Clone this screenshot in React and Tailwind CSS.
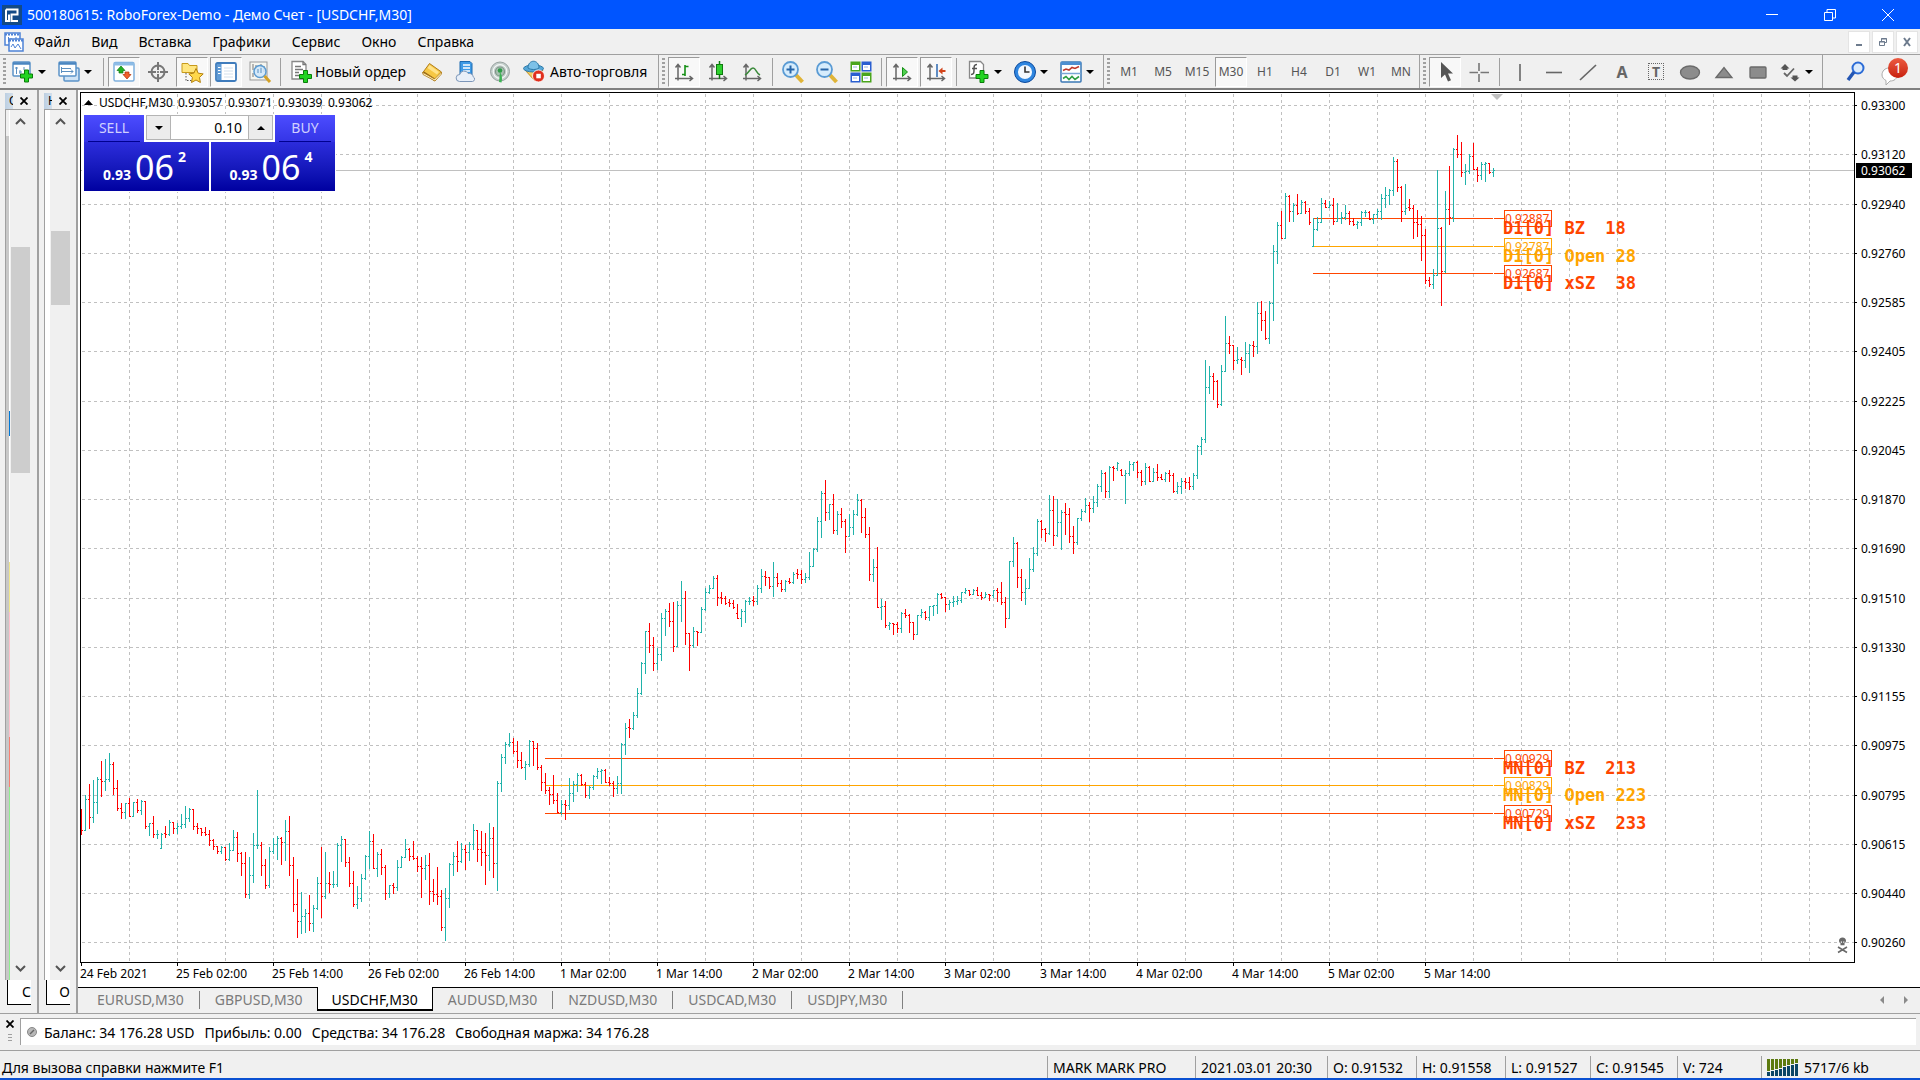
import React from 'react';

/* ---------- chart data: [high, low, close, open?] in plot units ---------- */
const BARS = [
  [809,835,830,825],[795,831,799],[784,829,817],[780,823,802],[777,814,779],[761,797,781],[759,791,779],[753,782,764],[762,795,788],[780,811,808],
  [803,819,812],[803,819,803],[798,817,816],[802,817,802],[799,813,810],[800,815,801],[801,829,826],[823,836,823],[816,838,834],[830,839,834],
  [833,849,834,848],[826,838,834,833],[820,836,822],[822,834,828],[823,834,826],[814,829,824],[806,828,818],[808,822,809],[809,830,826],[823,834,828],
  [828,836,832],[827,836,834],[830,846,840],[839,850,846],[846,854,851],[846,854,847],[847,861,859],[843,861,850],[830,850,837],[832,862,853],
  [852,876,863],[852,898,894],[857,899,875],[833,883,845],[790,849,845],[842,876,865],[859,889,885],[847,888,851],[838,854,844],[836,860,838],
  [837,865,842],[820,861,831],[816,876,865],[857,912,904],[879,938,921],[892,934,916],[909,933,913],[895,931,923],[905,932,908],[877,910,883],
  [847,918,896],[852,899,883],[872,893,884],[871,888,884],[843,887,845],[836,862,839],[839,867,862],[857,887,883],[871,907,904],[886,909,898],
  [874,902,878],[855,880,856],[831,869,841],[834,869,868],[852,877,854],[849,875,867],[865,900,893],[885,898,885],[883,894,887],[860,891,867],
  [856,868,857],[839,858,849],[848,861,856],[841,860,858],[856,872,866],[857,898,868],[855,880,865],[853,905,891],[879,902,894],[867,905,896],
  [890,931,927],[888,941,898],[863,908,864],[852,876,856],[841,872,861],[843,863,849],[845,870,852],[842,861,844],[824,850,830],[830,862,849],
  [831,866,852],[833,885,855],[823,871,838],[827,878,863],[781,891,783],[754,792,757],[742,764,744],[733,747,742],[738,754,751],[741,768,760],
  [752,769,767],[761,780,764],[740,767,741],[741,766,748],[743,770,767],[765,791,782],[773,794,790],[787,805,794],[775,804,800],[793,813,812],
  [800,815,804],[800,820,805],[778,810,793],[781,802,784],[773,792,775],[774,786,784],[782,798,795],[786,799,787],[775,790,776],[768,779,771],
  [769,784,770],[769,783,782],[777,786,783],[781,797,788],[776,794,783],[743,794,744],[723,755,728],[719,738,728,727],[712,730,715],[688,718,693],
  [662,695,663],[631,674,631],[623,653,645],[637,671,663],[648,670,654],[613,661,618],[609,636,611],[603,627,621],[602,652,646],[601,647,605],
  [581,622,598],[591,645,633],[634,671,645],[627,648,631],[631,646,632],[607,633,609],[588,611,592],[585,594,588],[576,589,578],[575,606,597],
  [592,604,598],[596,605,603],[599,607,603,602],[600,609,607],[604,619,618,613],[609,627,611],[600,623,601],[597,605,601],[596,606,601,600],[585,605,588],
  [569,593,576],[571,586,577],[577,589,586],[562,597,577],[573,587,583],[580,592,589],[580,592,581],[578,584,582],[572,584,574],[569,579,574,573],
  [570,584,579],[573,583,577],[552,580,566],[548,567,549],[517,552,521],[491,538,493],[480,521,512],[504,520,504],[494,534,530],[511,535,514],
  [508,528,521],[519,553,536],[514,537,527],[510,535,514],[494,516,500],[499,533,517],[508,538,534],[527,581,574],[559,582,567],[547,608,607],
  [599,620,606],[601,628,625],[622,630,623],[623,635,624],[622,633,628],[612,633,613],[609,618,615],[614,633,622],[622,640,634],[615,635,615],
  [609,618,612],[611,620,617],[606,621,606],[605,616,605],[593,614,594],[593,599,597],[597,612,604],[600,610,602],[596,607,601],[596,605,600],
  [592,603,592],[588,594,590],[590,596,594],[589,595,590],[587,596,595],[592,600,597],[592,598,594],[594,601,595],[590,598,590],[588,602,592],
  [582,605,602],[597,628,618],[561,619,561],[537,567,543],[542,588,577],[569,601,592],[579,605,588],[558,589,569],[547,572,553],[519,556,521],
  [520,538,529],[528,542,533],[495,535,510],[496,546,535],[499,537,522],[510,550,512],[503,535,514],[508,543,536],[526,554,542],[518,545,518],
  [509,521,511],[498,513,505],[502,522,508],[496,513,502],[484,507,486],[470,492,473],[472,498,491],[466,498,467],[466,481,468],[462,471,463],
  [469,476,475,470],[470,504,473],[461,476,464],[462,471,462],[461,478,472],[470,486,481],[463,485,467],[466,482,481],[468,482,472],[464,481,477],
  [474,480,479],[472,482,473],[470,482,475],[473,493,491],[482,494,486],[478,494,481],[478,489,482],[477,490,486],[473,490,475],[445,479,446],
  [437,455,439],[360,443,387],[366,394,376],[373,400,381],[380,408,404],[365,406,371],[316,372,343],[336,354,345],[345,370,360],[347,364,359],
  [357,375,360],[342,368,353],[344,373,345],[341,357,346],[302,354,313],[301,331,320],[311,340,338],[301,344,303],[245,321,251],[222,264,225],
  [211,239,238],[193,239,196],[195,222,211],[203,222,205],[194,215,213],[200,214,202],[201,214,211],[208,225,222],[218,247,229,246],[217,231,222],
  [198,223,203],[200,208,207],[201,208,205],[198,225,221],[203,222,218],[212,224,217],[205,220,213],[211,225,221],[218,226,224],[221,229,222],
  [211,226,212],[210,217,212],[211,220,219],[214,224,214],[209,219,211],[194,220,198],[187,208,195],[189,205,190],[157,196,161],[159,192,187],
  [186,222,211],[184,215,208],[199,211,208,207],[205,239,222],[210,237,224],[216,261,235],[229,284,280],[277,287,284],[269,289,275],[170,276,228],
  [227,306,271],[191,273,209],[166,225,217],[148,222,149],[135,158,154],[142,177,172],[164,185,171],[154,174,156],[143,170,169],[167,182,175],
  [162,180,164],[162,182,163],[163,174,172],[168,177,170],
];

const buildBars = () => {
  let up = '';
  let down = '';
  let prev = BARS[0][3];
  BARS.forEach(([high, low, close, open = prev], i) => {
    const x = 81 + i * 4;
    const d = `M${x + 0.5} ${high}V${low}M${x - 1} ${open + 0.5}h2M${x} ${close + 0.5}h2`;
    if (close <= open) up += d;
    else down += d;
    prev = close;
  });
  return { up, down };
};
const PATHS = buildBars();

const PRICES = [
  ['0.93300', 105], ['0.93120', 154], ['0.92940', 204], ['0.92760', 253], ['0.92585', 302], ['0.92405', 351],
  ['0.92225', 401], ['0.92045', 450], ['0.91870', 499], ['0.91690', 548], ['0.91510', 598], ['0.91330', 647],
  ['0.91155', 696], ['0.90975', 745], ['0.90795', 795], ['0.90615', 844], ['0.90440', 893], ['0.90260', 942],
];
const TIMES = [
  '24 Feb 2021', '25 Feb 02:00', '25 Feb 14:00', '26 Feb 02:00', '26 Feb 14:00', '1 Mar 02:00', '1 Mar 14:00', '2 Mar 02:00',
  '2 Mar 14:00', '3 Mar 02:00', '3 Mar 14:00', '4 Mar 02:00', '4 Mar 14:00', '5 Mar 02:00', '5 Mar 14:00',
];
const QUOTE = [['USDCHF,M30', 99], ['0.93057', 178], ['0.93071', 228], ['0.93039', 278], ['0.93062', 328]];
const COLUMNS = Array.from({ length: 36 }, (_, k) => 129 + k * 48);
const LEVELS = [
  { y: 218, x: 1313, price: '0.92887', text: 'D1[0] BZ  18', color: '#ff4500' },
  { y: 246, x: 1313, price: '0.92787', text: 'D1[0] Open 28', color: '#ffa500' },
  { y: 273, x: 1313, price: '0.92687', text: 'D1[0] xSZ  38', color: '#ff4500' },
  { y: 758, x: 545, price: '0.90929', text: 'MN[0] BZ  213', color: '#ff4500' },
  { y: 785, x: 545, price: '0.90829', text: 'MN[0] Open 223', color: '#ffa500' },
  { y: 813, x: 545, price: '0.90729', text: 'MN[0] xSZ  233', color: '#ff4500' },
];

function PriceChart() {
  return (
    <svg className="absolute inset-0 h-full w-full font-['Noto_Sans',sans-serif] text-[12px]" viewBox="78 90 1842 897" preserveAspectRatio="xMinYMin meet" role="img" aria-label="USDCHF,M30">
      <g shapeRendering="crispEdges" fill="none">
        <g stroke="#c0c0c0" strokeDasharray="3 3">
          {PRICES.map(([p, y]) => <path key={p} d={`M82 ${y + 0.5}H1854`} />)}
          {COLUMNS.map((x) => <path key={x} d={`M${x + 0.5} 94V962`} />)}
        </g>
        <path d="M81 170.5H1854" stroke="#c0c0c0" />
        {LEVELS.map((l) => <path key={l.y} d={`M${l.x} ${l.y + 0.5}H1493`} stroke={l.color} />)}
        <path d={PATHS.up} stroke="#20b2aa" />
        <path d={PATHS.down} stroke="#ff0000" />
        <path d="M80.5 92.5H1854.5V962.5H80.5Z" stroke="#000" />
        {PRICES.map(([p, y]) => <path key={p} d={`M1855 ${y + 0.5}h2`} stroke="#000" />)}
        {TIMES.map((t, i) => <path key={t} d={`M${81.5 + i * 96} 963v3`} stroke="#000" />)}
      </g>
      <path d="M1491 94h12l-6 6z" fill="#c0c0c0" />
      <path d="M84 105l4.500-5 4.500 5z" fill="#000" />
      {PRICES.map(([p, y]) => <text key={p} x="1861" y={y + 5}>{p}</text>)}
      {TIMES.map((t, i) => <text key={t} x={80 + i * 96} y="978">{t}</text>)}
      <rect x="1856" y="163" width="56" height="15" fill="#000" />
      <text x="1861" y="175" fill="#fff">0.93062</text>
      {QUOTE.map(([t, x]) => <text key={t} x={x} y="107">{t}</text>)}
      {LEVELS.map((l) => (
        <g key={l.y} fill={l.color}>
          <path d={`M1494 ${l.y + 0.5}h10M1504.5 ${l.y - 7.5}h47v16h-47z`} fill="none" stroke={l.color} shapeRendering="crispEdges" />
          <text x="1505" y={l.y + 5}>{l.price}</text>
          <text x="1503" y={l.y + 16} className="font-['DejaVu_Sans_Mono',monospace] text-[17px] font-bold whitespace-pre">{l.text}</text>
        </g>
      ))}
      <g fill="#696969">
        <path d="M1842.500 937.500c2.200 0 3.500 1.400 3.500 3.200 0 1.200-.7 2.100-1.500 2.600v2h-4v-2c-.8-.5-1.500-1.400-1.500-2.600 0-1.800 1.300-3.200 3.500-3.200z" />
        <path d="M1838 947l9 5.500M1847 947l-9 5.500" stroke="#696969" strokeWidth="1.600" />
        <path d="M1840.800 941.500h1.200v1.200h-1.200zM1843.200 941.500h1.200v1.200h-1.200z" fill="#fff" />
      </g>
    </svg>
  );
}

/* ---------- icons ---------- */
const Svg = ({ children, w = 24 }) => (
  <svg width={w} height={24} viewBox={`0 0 ${w} 24`} fill="none" aria-hidden="true" className="shrink-0">{children}</svg>
);
const Plus = ({ x, y }) => (
  <path transform={`translate(${x} ${y})`} d="M4.500.5h4v4h4v4h-4v4h-4v-4h-4v-4h4z" fill="#22d422" stroke="#0a7d0a" />
);
const Axes = () => <path d="M6 20.500V5M3.500 7.500l2.500-3 2.500 3M3 18.500h17M17.500 16l3 2.500-3 2.500" stroke="#666" strokeWidth="1.500" />;

const ICONS = {
  newChart: (
    <Svg>
      <rect x="2" y="2" width="17" height="14" rx="1" fill="#fff" stroke="#5b93c8" strokeWidth="1.500" />
      <path d="M2 3.500h17" stroke="#4a86c0" strokeWidth="2.500" />
      <path d="M5.500 7v7M4 8h3M9 10v4M8 12h3M13 7v3" stroke="#5b8fc0" />
      <Plus x={9} y={9.500} />
    </Svg>
  ),
  profiles: (
    <Svg>
      <rect x="7" y="8" width="15" height="13" rx="1" fill="#cfe3f5" stroke="#5b93c8" strokeWidth="1.500" />
      <rect x="2" y="2" width="17" height="14" rx="1" fill="#fff" stroke="#5b93c8" strokeWidth="1.500" />
      <path d="M2 3.500h17" stroke="#4a86c0" strokeWidth="2.500" />
      <path d="M4.500 7v6M4 11.500h12M14 9.500l2 2-2 2M5 8.500h9" stroke="#5b8fc0" />
    </Svg>
  ),
  market: (
    <Svg>
      <rect x="2" y="2.500" width="20" height="18.500" rx="1.500" fill="#fff" stroke="#7fb0dd" strokeWidth="1.500" />
      <path d="M2 4h20" stroke="#8dbce6" strokeWidth="3" />
      <path d="M9 6l4 4.500h-2V13H7v-2.500H5z" fill="#23b023" stroke="#127812" strokeWidth=".7" />
      <path d="M15 19l-4-4.500h2V12h4v2.500h2z" fill="#f0602a" stroke="#b03208" strokeWidth=".7" />
    </Svg>
  ),
  data: (
    <Svg>
      <circle cx="12" cy="12" r="6.500" stroke="#777" strokeWidth="2" />
      <path d="M12 2v8M12 14v8M2 12h8M14 12h8" stroke="#777" strokeWidth="2" />
      <circle cx="12" cy="12" r="1" fill="#666" />
    </Svg>
  ),
  navigator: (
    <Svg>
      <path d="M2 3.500h6l1.500 2H17v7H2z" fill="#ffe680" stroke="#c79a1c" />
      <path d="M6 13v8M7 20.500h5" stroke="#555" strokeDasharray="1.500 1.500" />
      <path d="M16 8.500l2.200 4.700 5 .7-3.700 3.500.9 5.100-4.400-2.500-4.500 2.500.9-5.100-3.600-3.500 5-.7z" fill="#ffd84a" stroke="#b5820e" />
    </Svg>
  ),
  terminal: (
    <Svg>
      <rect x="2" y="3" width="20" height="18" rx="1.500" fill="#fff" stroke="#3f7cbc" strokeWidth="1.800" />
      <path d="M3 4h4.500v16H3z" fill="#5f9bd6" />
      <path d="M10 8h9M10 11h9M10 14h9M10 17h9" stroke="#d3e0ec" />
      <path d="M4 7.500h2.500M4 10.500h2.500M4 13.500h2.500" stroke="#fff" />
    </Svg>
  ),
  tester: (
    <Svg>
      <rect x="2" y="2" width="17" height="18" fill="#f6f6f0" stroke="#999" />
      <path d="M5 4v6M8 5v4M13 4v4M16 6v6M5 13v4" stroke="#777" />
      <circle cx="12" cy="11.500" r="6" fill="#cfe8fb" fillOpacity=".85" stroke="#5c9bd0" strokeWidth="1.500" />
      <path d="M10 9v4M13 8v5" stroke="#5b8fc0" />
      <path d="M16.500 16l5.500 6" stroke="#d3a126" strokeWidth="3" />
    </Svg>
  ),
  order: (
    <Svg>
      <path d="M3 1.500h11l3 3V19H3z" fill="#fff" stroke="#888" strokeWidth="1.300" />
      <path d="M14 1.500v3h3M6 6.500h6M6 9.500h8M6 12.500h4M6 15.500h4" stroke="#777" strokeWidth="1.300" />
      <Plus x={10} y={10} />
    </Svg>
  ),
  metaEditor: (
    <Svg>
      <path d="M2.500 13l7-9.500 12 8.500-6.500 9z" fill="#f6c744" stroke="#b17d1a" />
      <path d="M2.500 13l12 8 .500-2.500L4 11.500z" fill="#8e5f10" />
      <path d="M3 14.500l12 6.500 6.500-7v-2l-7 7-11.500-6.500z" fill="#fff3c8" stroke="#b17d1a" strokeWidth=".8" />
      <path d="M9.500 5l9.500 7-2 2.500L7.500 8z" fill="#ffe38a" />
    </Svg>
  ),
  market2: (
    <Svg>
      <path d="M6 1.500h10l2 2V15H6z" fill="#3f9be6" stroke="#1c6ab0" />
      <path d="M9 5h7M9 8h7M9 11h7" stroke="#fff" strokeWidth="1.500" />
      <path d="M5.500 21.500a3.500 3.500 0 01.3-7 4.500 4.500 0 018.400-1 4 4 0 015 3.300 2.500 2.500 0 01-.7 4.700z" fill="#e8eff8" stroke="#7c96b8" />
    </Svg>
  ),
  signals: (
    <Svg>
      <circle cx="12" cy="11.500" r="9.500" fill="#c3ccca" stroke="#98a3a0" />
      <circle cx="12" cy="11.500" r="6.800" stroke="#f4f8f6" strokeWidth="1.200" />
      <circle cx="12" cy="11.500" r="4.500" fill="#a9c0b2" stroke="#7f9688" strokeWidth="1.200" />
      <circle cx="12" cy="10.500" r="2.300" fill="#2e9c48" />
      <path d="M12 12c2 3 2.500 6 1.500 10.500a12 12 0 01-2.500-.5z" fill="#3cb354" />
    </Svg>
  ),
  auto: (
    <Svg>
      <path d="M3 10l10 11 8-11z" fill="#f6cf62" stroke="#bf8d1f" />
      <ellipse cx="11.500" cy="8.500" rx="10" ry="3.500" fill="#55a7d8" stroke="#2d79a8" />
      <path d="M6 8c0-9 11-9 11 0-3 2-8 2-11 0z" fill="#7cc1e8" stroke="#2d79a8" />
      <circle cx="16.500" cy="16" r="6" fill="#e0301e" stroke="#fff" strokeWidth=".8" />
      <rect x="14.300" y="13.800" width="4.500" height="4.500" fill="#fff" />
    </Svg>
  ),
  barChart: <Svg><Axes /><path d="M13 5v11M13 6.500h3.500M10 14.500h3" stroke="#169016" strokeWidth="1.600" /></Svg>,
  candles: <Svg><Axes /><path d="M13.500 1v18" stroke="#0f7a0f" strokeWidth="1.500" /><rect x="10.500" y="4.500" width="6" height="10" fill="#2ed02e" stroke="#0f7a0f" /></Svg>,
  line: <Svg><Axes /><path d="M5 15c4-2 5-7 8-7s3 5 7 7" stroke="#3b8a3b" strokeWidth="1.500" /></Svg>,
  zoomIn: (
    <Svg>
      <path d="M15 15l6.500 7" stroke="#e0b437" strokeWidth="4" />
      <circle cx="9.500" cy="9.500" r="7.500" fill="#d6ecfc" stroke="#5a9bd4" strokeWidth="1.800" />
      <path d="M9.500 5.500v8M5.500 9.500h8" stroke="#2765a8" strokeWidth="2" />
    </Svg>
  ),
  zoomOut: (
    <Svg>
      <path d="M15 15l6.500 7" stroke="#e0b437" strokeWidth="4" />
      <circle cx="9.500" cy="9.500" r="7.500" fill="#d6ecfc" stroke="#5a9bd4" strokeWidth="1.800" />
      <path d="M5.500 9.500h8" stroke="#2765a8" strokeWidth="2" />
    </Svg>
  ),
  tiles: (
    <Svg>
      <rect x="1.500" y="1.500" width="10" height="10" fill="#4aa51c" /><rect x="12.500" y="1.500" width="10" height="10" fill="#2a5fd0" />
      <rect x="1.500" y="12.500" width="10" height="10" fill="#2a5fd0" /><rect x="12.500" y="12.500" width="10" height="10" fill="#4aa51c" />
      <path d="M3 5h7v5H3zM14 5h7v5h-7zM3 16h7v5H3zM14 16h7v5h-7z" fill="#fff" />
      <path d="M4 7h4M15 7h4M4 18h4M15 18h4" stroke="#9ab8dd" />
    </Svg>
  ),
  autoScroll: <Svg><Axes /><path d="M12.500 7.500l5 4.500-5 4.500z" fill="#4fd04f" stroke="#169016" /></Svg>,
  shift: <Svg><Axes /><path d="M13 4v13" stroke="#2c68b0" strokeWidth="1.500" /><path d="M14.500 11l4-3.500v2.500h3v2h-3v2.500z" fill="#d2431a" /></Svg>,
  indicators: (
    <Svg>
      <path d="M2.500 1.500h11l3 3V18h-14z" fill="#fff" stroke="#888" strokeWidth="1.300" />
      <path d="M10 4.500c-3 0-3 2-3 5s0 5-3 5M5 8.500h5" stroke="#555" strokeWidth="1.500" />
      <Plus x={8.500} y={10} />
    </Svg>
  ),
  clock: (
    <Svg>
      <circle cx="12" cy="12" r="8.800" fill="#f3f9ff" stroke="#2f86e0" strokeWidth="3.500" />
      <circle cx="12" cy="12" r="10.500" stroke="#0d4a9c" />
      <path d="M12 6.500V12h4.500" stroke="#333" strokeWidth="1.600" />
    </Svg>
  ),
  template: (
    <Svg>
      <rect x="2" y="2" width="20" height="20" rx="1" fill="#fff" stroke="#3a78b5" strokeWidth="1.500" />
      <path d="M2 3.500h20" stroke="#4d8fd1" strokeWidth="3" /><path d="M2 13.500h20" stroke="#7aa7d4" strokeWidth="1.500" />
      <path d="M4 10.500l3-1.500 3 1 3-2.500 3 1 4-2" stroke="#c0392b" strokeWidth="1.600" />
      <path d="M4 18.500l3-2 3 3 3-3 3 3 4-3" stroke="#2f9e44" strokeWidth="1.600" />
    </Svg>
  ),
  cursor: <Svg><path d="M8 2v16l4-3.500 3 7 3-1.300-3-6.700h5z" fill="#555" /></Svg>,
  cross: <Svg><path d="M12 3v8M12 14v8M2.500 12.500H11M13.500 12.500H22" stroke="#777" strokeWidth="1.600" /></Svg>,
  vline: <Svg><path d="M12 4v17" stroke="#666" strokeWidth="1.600" /></Svg>,
  hline: <Svg><path d="M4 12.500h16" stroke="#666" strokeWidth="1.600" /></Svg>,
  trend: <Svg><path d="M4 20L20 5" stroke="#666" strokeWidth="1.700" /></Svg>,
  ellipse: <Svg><ellipse cx="12" cy="12.500" rx="9.500" ry="6.500" fill="#8c8c8c" stroke="#6a6a6a" strokeWidth="1.300" /></Svg>,
  triangle: <Svg><path d="M4 17.500l8-10 8 10z" fill="#8c8c8c" stroke="#6a6a6a" strokeWidth="1.300" /></Svg>,
  rect: <Svg><rect x="4" y="7" width="16" height="11" rx="1" fill="#8c8c8c" stroke="#6a6a6a" strokeWidth="1.300" /></Svg>,
  arrows: (
    <Svg>
      <path d="M7 4l4.500 4.500H9.500V10h-5V8.500h-2zM17 21.500l-4.500-4H14.500V15.500h5v2h2z" fill="#555" />
      <path d="M6 13l3 3 7-7.500" stroke="#666" strokeWidth="1.800" />
    </Svg>
  ),
};

/* ---------- toolbar pieces ---------- */
const Caret = () => <span className="h-0 w-0 border-x-4 border-t-4 border-x-transparent border-t-black" />;
const Sep = () => <span className="mr-1 ml-0.5 h-7 w-px bg-[#a0a0a0]" />;
const Grip = () => <span className="mx-[3px] h-7 w-[3px] bg-[repeating-linear-gradient(#a0a0a0_0_2px,transparent_2px_4px)]" />;

function Tool({ label, icon, pressed, children }) {
  const look = pressed
    ? 'border-t-[#9a9a9a] border-l-[#9a9a9a] border-r-white border-b-white bg-[#f8f8f8]'
    : 'border-transparent';
  return (
    <button type="button" aria-label={label} aria-pressed={!!pressed} className={`mr-0.5 flex h-[30px] w-8 items-center justify-center border ${look}`}>
      {icon || children}
    </button>
  );
}
const DropTool = ({ label, icon }) => (
  <button type="button" aria-label={label} className="flex h-[30px] w-[46px] items-center gap-[3px] pl-0.5">
    {icon}<Caret />
  </button>
);
const Group = ({ children, label }) => (
  <div role="group" aria-label={label} className="flex h-full items-center border-r border-[#a0a0a0]">{children}</div>
);

function Toolbar() {
  return (
    <div className="flex h-[35px] shrink-0 items-center overflow-hidden border-b-2 border-[#808080] bg-[#f0f0f0] text-[14px]">
      <Group label="Стандартная">
        <Grip />
        <DropTool label="Новый график" icon={ICONS.newChart} />
        <DropTool label="Профили" icon={ICONS.profiles} />
        <Sep />
        <Tool label="Обзор рынка" icon={ICONS.market} pressed />
        <Tool label="Окно данных" icon={ICONS.data} />
        <Tool label="Навигатор" icon={ICONS.navigator} pressed />
        <Tool label="Терминал" icon={ICONS.terminal} pressed />
        <Tool label="Тестер стратегий" icon={ICONS.tester} />
        <Sep />
        <button type="button" className="flex h-[30px] items-center gap-0.5 pl-1">{ICONS.order}<span className="w-[101px] text-left whitespace-nowrap">Новый ордер</span></button>
        <Tool label="MetaEditor" icon={ICONS.metaEditor} />
        <Tool label="Маркет" icon={ICONS.market2} />
        <Tool label="Сигналы" icon={ICONS.signals} />
        <button type="button" className="flex h-[30px] items-center gap-1 pr-2 pl-1">{ICONS.auto}<span className="w-[100px] text-left whitespace-nowrap">Авто-торговля</span></button>
      </Group>
      <Group label="Графики">
        <Grip />
        <Tool label="Бары" icon={ICONS.barChart} pressed />
        <Tool label="Японские свечи" icon={ICONS.candles} />
        <Tool label="Линия" icon={ICONS.line} />
        <Sep />
        <Tool label="Приблизить" icon={ICONS.zoomIn} />
        <Tool label="Отдалить" icon={ICONS.zoomOut} />
        <Tool label="Расположить окна" icon={ICONS.tiles} />
        <Sep />
        <Tool label="Автопрокрутка" icon={ICONS.autoScroll} pressed />
        <Tool label="Сдвиг графика" icon={ICONS.shift} pressed />
        <Sep />
        <div className="flex pl-1">
          <DropTool label="Индикаторы" icon={ICONS.indicators} />
          <DropTool label="Периоды" icon={ICONS.clock} />
          <DropTool label="Шаблоны" icon={ICONS.template} />
        </div>
      </Group>
      <Group label="Периоды">
        <Grip />
        {['M1', 'M5', 'M15', 'M30', 'H1', 'H4', 'D1', 'W1', 'MN'].map((p) => (
          <Tool key={p} label={p} pressed={p === 'M30'}><span className="text-[12px] text-[#555]">{p}</span></Tool>
        ))}
      </Group>
      <Group label="Инструменты">
        <Grip />
        <Tool label="Курсор" icon={ICONS.cursor} pressed />
        <Tool label="Перекрестие" icon={ICONS.cross} />
        <Sep />
        <Tool label="Вертикальная линия" icon={ICONS.vline} />
        <Tool label="Горизонтальная линия" icon={ICONS.hline} />
        <Tool label="Трендовая линия" icon={ICONS.trend} />
        <Tool label="Текст"><span className="text-[16px] font-bold text-[#666]">A</span></Tool>
        <Tool label="Текстовая метка"><span className="flex h-[17px] w-4 items-center justify-center border border-dotted border-[#666] text-[14px] font-bold text-[#666]">T</span></Tool>
        <Tool label="Эллипс" icon={ICONS.ellipse} />
        <Tool label="Треугольник" icon={ICONS.triangle} />
        <Tool label="Прямоугольник" icon={ICONS.rect} />
        <DropTool label="Стрелки" icon={ICONS.arrows} />
      </Group>
      <div className="ml-auto flex items-center gap-3 pr-3">
        <button type="button" aria-label="Поиск">
          <Svg><circle cx="14" cy="8" r="5.500" fill="#dcebfb" stroke="#2b6bd6" strokeWidth="2" /><path d="M10 12l-6 8" stroke="#2456b4" strokeWidth="3.500" /></Svg>
        </button>
        <button type="button" aria-label="Уведомления" className="relative h-8 w-7">
          <svg width="28" height="32" viewBox="0 0 28 32" fill="none" aria-hidden="true">
            <path d="M9 12c5 0 8 3 8 7s-3 6-7 6l-4 4v-4.500c-2-1-4-3-4-5.500 0-4 3-7 7-7z" fill="#fff" stroke="#aaa" />
          </svg>
          <span className="absolute top-0.5 right-0 flex h-5 w-5 items-center justify-center rounded-full bg-linear-to-b from-[#ec5a40] to-[#c81c08] text-[14px] text-white">1</span>
        </button>
      </div>
    </div>
  );
}

function TitleBar() {
  const btn = 'flex h-full w-[58px] items-center justify-center';
  return (
    <header className="flex h-[29px] shrink-0 items-center bg-[#0055ff] pr-[3px] pl-0.5 text-white">
      <svg width="20" height="20" viewBox="0 0 20 20" aria-hidden="true">
        <rect width="20" height="20" fill="#134a86" />
        <path d="M4 4.500h11.500v5H9.500v6.500h6.500M4 4.500v11.500h3V9.500" fill="none" stroke="#fff" strokeWidth="2" />
      </svg>
      <h1 className="ml-[5px] text-[14px] whitespace-nowrap">500180615: RoboForex-Demo - Демо Счет - [USDCHF,M30]</h1>
      <div className="ml-auto flex h-full">
        <button type="button" aria-label="Свернуть" className={btn}><svg width="12" height="12"><path d="M0 5.500h12" stroke="#fff" /></svg></button>
        <button type="button" aria-label="Восстановить" className={btn}>
          <svg width="12" height="12" fill="none" stroke="#fff"><path d="M.5 3.500h8v8h-8zM3 3V.5h8.500V9H9" /></svg>
        </button>
        <button type="button" aria-label="Закрыть" className={btn}><svg width="12" height="12" stroke="#fff"><path d="M0 0l12 12M12 0L0 12" /></svg></button>
      </div>
    </header>
  );
}

function MenuBar() {
  const btn = 'flex h-[22px] w-[22px] items-center justify-center border border-[#e4e4e4] bg-white';
  return (
    <div className="flex h-[26px] shrink-0 items-center border-b border-[#a0a0a0] bg-[#f0f0f0] pl-1">
      <svg width="20" height="20" viewBox="0 0 20 20" fill="none" aria-hidden="true">
        <rect x="1" y="1" width="15" height="12" fill="#fff" stroke="#4d82d6" strokeWidth="1.500" />
        <path d="M1 2.500h15" stroke="#4d82d6" strokeWidth="2" strokeDasharray="2 1" />
        <path d="M4.500 5v5M7 6v4M12 5v3" stroke="#4d82d6" />
        <rect x="5" y="7" width="14" height="12" fill="#fff" stroke="#4d82d6" strokeWidth="1.500" />
        <path d="M5 8.500h14" stroke="#4d82d6" strokeWidth="2" strokeDasharray="2 1" />
        <path d="M7 15l2-3 2 4 3-4 3 5" stroke="#4d82d6" />
      </svg>
      <nav className="flex gap-px text-[14px]">
        {['Файл', 'Вид', 'Вставка', 'Графики', 'Сервис', 'Окно', 'Справка'].map((m) => (
          <button key={m} type="button" className="px-2.5">{m}</button>
        ))}
      </nav>
      <div className="ml-auto flex gap-0.5 pr-0.5">
        <button type="button" aria-label="Свернуть окно" className={btn}><svg width="12" height="12"><path d="M3 9h6" stroke="#6d7b8d" strokeWidth="2" /></svg></button>
        <button type="button" aria-label="Восстановить окно" className={btn}>
          <svg width="12" height="12" fill="none" stroke="#6d7b8d"><path d="M2.500 5.500h5v4h-5zM2 6h6M4.500 5V2.500h5v4H8M4 3h6" /></svg>
        </button>
        <button type="button" aria-label="Закрыть окно" className={btn}><svg width="12" height="12" stroke="#6d7b8d" strokeWidth="2"><path d="M3 2l6 8M9 2L3 10" /></svg></button>
      </div>
    </div>
  );
}

/* ---------- collapsed side panels ---------- */
const Chevron = ({ down }) => (
  <svg width="11" height="7" viewBox="0 0 11 7" fill="none" stroke="#555" strokeWidth="2" aria-hidden="true">
    <path d={down ? 'M1 1l4.500 4.500L10 1' : 'M1 6l4.500-4.500L10 6'} />
  </svg>
);

function SidePanel({ title, tab, strip, thumb }) {
  return (
    <aside className="flex w-[39px] shrink-0 flex-col border-r-2 border-r-[#a0a0a0] bg-[#f0f0f0] pt-0.5 pr-1.5 pb-2 pl-[5px]">
      <div className="flex h-[17px] items-center">
        <span className="w-2 overflow-hidden bg-linear-to-r from-[#bccfe2] to-[#d3dfeb] pl-1 text-[12px] leading-4">{title}</span>
        <button type="button" aria-label="Закрыть панель" className="ml-[7px]">
          <svg width="8" height="8" stroke="#000" strokeWidth="1.800"><path d="M.5.5l7 7M7.500.5l-7 7" /></svg>
        </button>
      </div>
      <div className="flex flex-1 border-t border-l border-[#a0a0a0]">
        {strip}
        <div className="flex flex-1 flex-col items-center justify-between bg-[#f0f0f0] pb-2">
          <button type="button" aria-label="Вверх" className="flex h-[22px] items-center"><Chevron /></button>
          <span className={`w-[19px] bg-[#cdcdcd] ${thumb}`} />
          <span className="flex-1" />
          <button type="button" aria-label="Вниз" className="flex items-center"><Chevron down /></button>
        </div>
      </div>
      <div className="ml-0.5 flex h-[25px] w-6 justify-end overflow-hidden border-b border-l border-black bg-white text-[14px] leading-6">{tab}</div>
    </aside>
  );
}

function TradePanel() {
  const side = 'flex h-[27px] w-[60px] flex-col items-stretch bg-linear-to-b from-[#4c4cff] to-[#3434e6] px-1 text-[14px] text-[#d0d0ff]';
  const price = 'flex h-[49px] flex-1 items-end bg-linear-to-b from-[#2c2cdc] to-[#0000a0] pl-[19px] text-white';
  const Quote = ({ sup, label }) => (
    <button type="button" aria-label={label} className={price}>
      <span className="pb-2 text-[14px] leading-4 font-bold">0.93</span>
      <span className="ml-1 pb-3 text-[34px] leading-6">06</span>
      <span className="ml-1 self-start pt-1 text-[14px] font-bold">{sup}</span>
    </button>
  );
  return (
    <section aria-label="Торговля" className="absolute top-6 left-1 w-[254px] bg-white p-px pl-0.5">
      <div className="flex justify-between">
        <button type="button" className={side}><span className="flex-1 border-b border-[#000090] leading-[26px]">SELL</span></button>
        <div className="flex h-[25px] w-[127px] border border-[#b4b4b4] bg-white">
          <button type="button" aria-label="Уменьшить объем" className="flex w-6 items-center justify-center border-r border-[#b4b4b4] bg-[#ececec]"><Caret /></button>
          <input aria-label="Объем" defaultValue="0.10" className="min-w-0 flex-1 pr-1.5 text-right text-[14px] outline-none" />
          <button type="button" aria-label="Увеличить объем" className="flex w-6 items-center justify-center border-l border-[#b4b4b4] bg-[#ececec]">
            <span className="h-0 w-0 border-x-4 border-b-4 border-x-transparent border-b-black" />
          </button>
        </div>
        <button type="button" className={side}><span className="flex-1 border-b border-[#000090] leading-[26px]">BUY</span></button>
      </div>
      <div className="flex gap-0.5">
        <Quote sup="2" label="SELL 0.93062" />
        <Quote sup="4" label="BUY 0.93064" />
      </div>
    </section>
  );
}

const TABS = ['EURUSD,M30', 'GBPUSD,M30', 'USDCHF,M30', 'AUDUSD,M30', 'NZDUSD,M30', 'USDCAD,M30', 'USDJPY,M30'];

function ChartTabs() {
  return (
    <div className="flex h-[26px] shrink-0 items-start border-t border-black bg-[#f0f0f0] pr-3 pl-1">
      <nav className="flex text-[14px]">
        {TABS.map((t, i) => t === 'USDCHF,M30' ? (
          <button key={t} type="button" aria-current="page" className="relative -mt-px -ml-px h-6 border-x border-b-2 border-black bg-white px-[14px] pt-1 leading-[18px]">{t}</button>
        ) : (
          <button key={t} type="button" className="flex h-6 items-center text-[#7a7a7a]">
            <span className={`px-[15px] leading-[18px] ${i === 1 ? '' : 'border-r border-[#808080]'}`}>{t}</span>
          </button>
        ))}
      </nav>
      <div className="ml-auto flex h-6 items-center gap-5">
        <button type="button" aria-label="Назад" className="h-0 w-0 border-y-4 border-r-4 border-y-transparent border-r-[#8a8a8a]" />
        <button type="button" aria-label="Вперед" className="h-0 w-0 border-y-4 border-l-4 border-y-transparent border-l-[#8a8a8a]" />
      </div>
    </div>
  );
}

function BalanceRow() {
  return (
    <section aria-label="Баланс" className="flex h-9 shrink-0 items-start bg-[#f0f0f0] pt-1 pr-1">
      <div className="flex w-5 shrink-0 flex-col items-center gap-1.5 pt-0.5">
        <button type="button" aria-label="Закрыть терминал"><svg className="block" width="8" height="8" stroke="#000" strokeWidth="1.800"><path d="M.5.5l7 7M7.500.5l-7 7" /></svg></button>
        <span className="h-2 w-1 bg-[repeating-linear-gradient(#a0a0a0_0_1px,transparent_1px_3px)]" />
      </div>
      <div className="flex h-[27px] flex-1 items-center gap-[7px] border-t border-l border-[#a0a0a0] bg-white pl-1.5 text-[14px]">
        <svg width="10" height="10" viewBox="0 0 10 10" aria-hidden="true"><circle cx="5" cy="5" r="4.500" fill="#b8b8b8" stroke="#888" /><path d="M3 7l4-4" stroke="#666" strokeWidth="1.500" /></svg>
        <p className="flex gap-2.5 whitespace-nowrap">
          <span>Баланс: 34 176.28 USD</span><span>Прибыль: 0.00</span><span>Средства: 34 176.28</span><span>Свободная маржа: 34 176.28</span>
        </p>
      </div>
    </section>
  );
}

function StatusBar() {
  const cell = 'flex h-full items-center border-l border-[#a0a0a0] pl-[5px] whitespace-nowrap';
  return (
    <footer className="flex h-[30px] shrink-0 items-stretch border-t border-b-2 border-t-[#a0a0a0] border-b-[#0a50d2] bg-[#f0f0f0] pt-[5px] pl-0.5 text-[14px]">
      <span className="flex flex-1 items-center whitespace-nowrap">Для вызова справки нажмите F1</span>
      <span className={`${cell} w-[148px]`}>MARK MARK PRO</span>
      <span className={`${cell} w-[132px]`}>2021.03.01 20:30</span>
      <span className={`${cell} w-[89px]`}>O: 0.91532</span>
      <span className={`${cell} w-[89px]`}>H: 0.91558</span>
      <span className={`${cell} w-[85px]`}>L: 0.91527</span>
      <span className={`${cell} w-[87px]`}>C: 0.91545</span>
      <span className={`${cell} w-[84px]`}>V: 724</span>
      <span className={`${cell} w-[159px] gap-[5px]`}>
        <svg width="32" height="17" viewBox="0 0 32 17" aria-hidden="true" shapeRendering="crispEdges">
          {[12, 11, 10, 9, 7, 6, 5, 4].map((h, i) => (
            <g key={h}>
              <rect x={i * 4} y="0" width="3" height={h} fill="#5c7a10" />
              <rect x={i * 4} y={h + 1} width="3" height={16 - h} fill="#0b4566" />
            </g>
          ))}
        </svg>
        5717/6 kb
      </span>
    </footer>
  );
}

export default function App() {
  return (
    <div className="flex h-screen flex-col overflow-hidden bg-[#f0f0f0] font-['Noto_Sans',sans-serif] text-black">
      <TitleBar />
      <MenuBar />
      <Toolbar />
      <main className="flex min-h-0 flex-1 border-b border-[#a0a0a0]">
        <SidePanel
          title="О" tab="С" thumb="mt-[115px] h-[226px]"
          strip={
            <div className="flex w-1 shrink-0">
              <span className="mt-[26px] w-[3px] bg-[#c8c8c8]" />
              <div className="flex w-px flex-col bg-white pt-[301px]">
                <span className="h-[25px] bg-[#0078d7]" />
                <span className="mt-[126px] h-[50px] bg-[#f0e68c]" />
                <span className="h-[125px] bg-[#ffc0cb]" />
                <span className="h-[50px] bg-[#fa8072]" />
                <span className="flex-1 bg-[#90ee90]" />
              </div>
            </div>
          }
        />
        <SidePanel title="Н" tab="О" thumb="mt-[99px] h-[74px]" strip={<div className="w-[5px] shrink-0 bg-white" />} />
        <div className="flex min-w-0 flex-1 flex-col">
          <div className="relative flex-1 bg-white">
            <PriceChart />
            <TradePanel />
          </div>
          <ChartTabs />
        </div>
      </main>
      <BalanceRow />
      <StatusBar />
    </div>
  );
}
